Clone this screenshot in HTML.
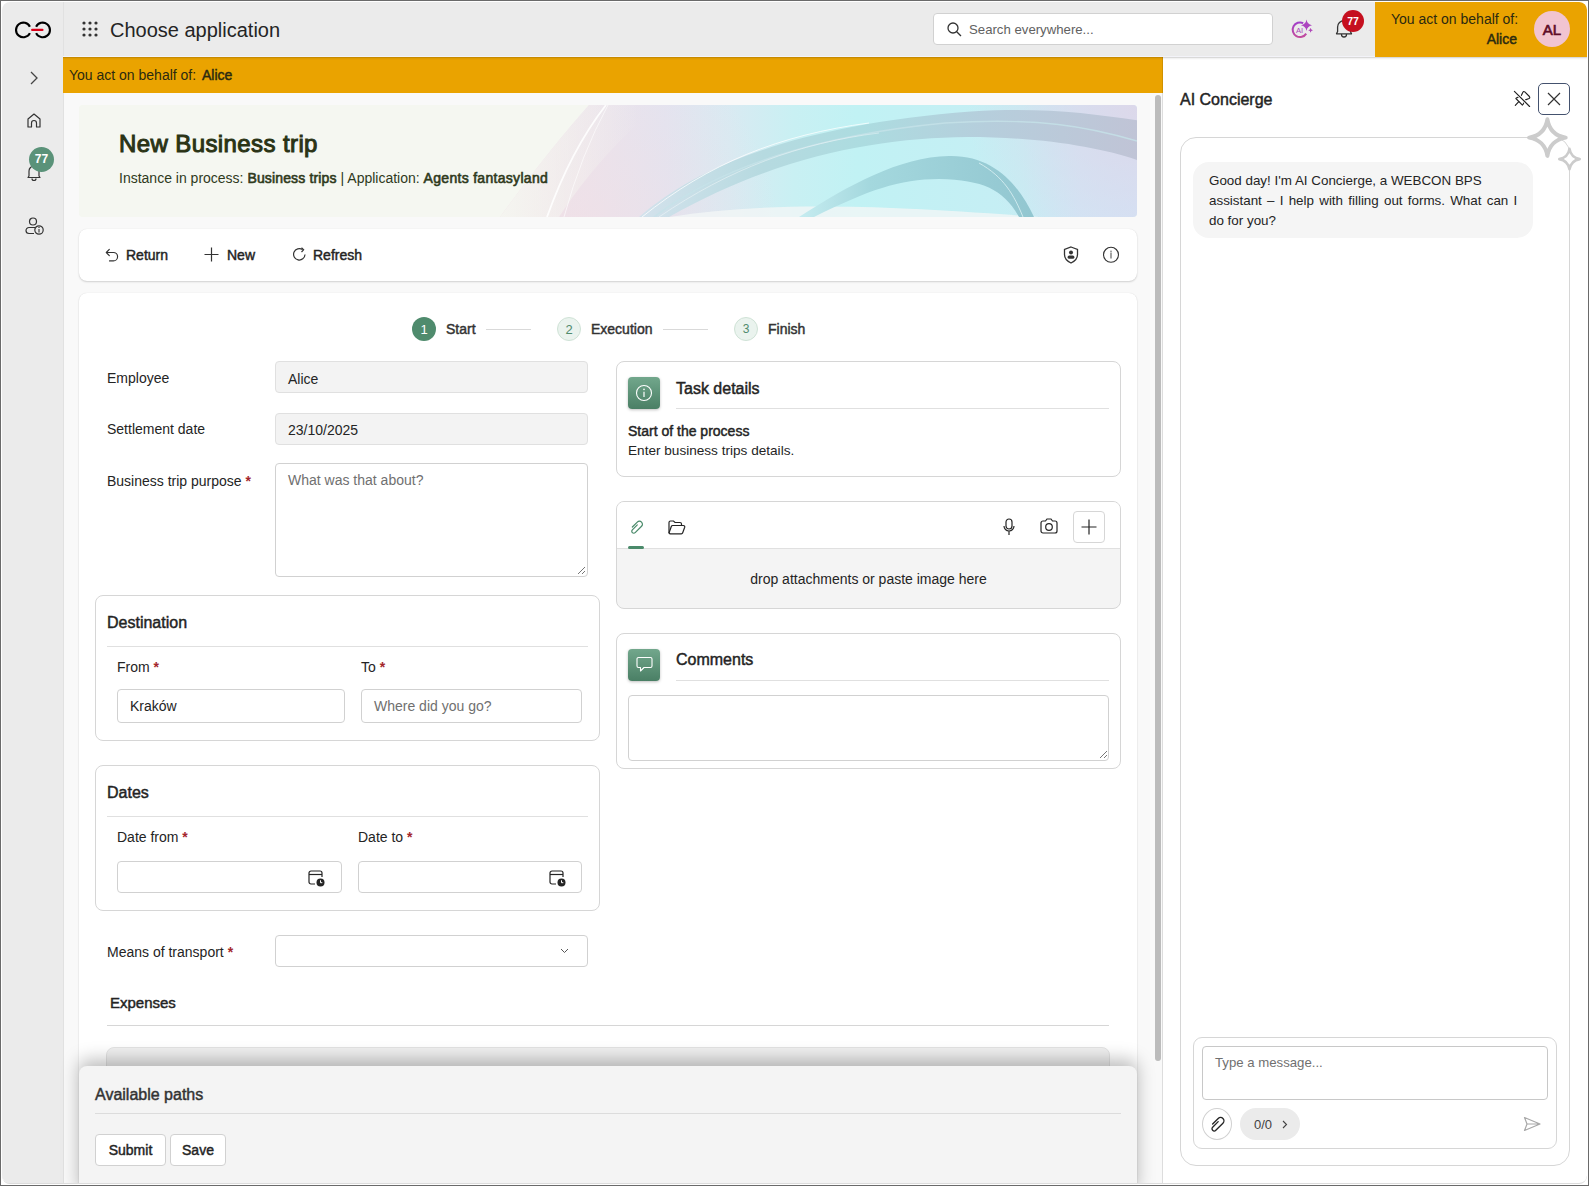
<!DOCTYPE html>
<html><head><meta charset="utf-8">
<style>
*{box-sizing:border-box;margin:0;padding:0}
html,body{width:1589px;height:1186px;overflow:hidden}
body{background:#fff;font-family:"Liberation Sans",sans-serif;color:#242424;position:relative}
.a{position:absolute}
.t{position:absolute;white-space:nowrap;line-height:1}
#frame{left:0;top:0;width:1589px;height:1186px;border:1px solid #6a6a6a;pointer-events:none;z-index:100}
#app{left:2px;top:2px;width:1585px;height:1182px;border-radius:8px;overflow:hidden;background:#ebebeb}
.req{color:#a4262c;font-weight:700}
svg{position:absolute;overflow:visible}
</style></head><body>
<div id="frame" class="a"></div>
<div class="a" style="left:2px;top:2px;width:1585px;height:1182px;border-bottom:1px solid #dcdcdc;border-radius:8px;z-index:99"></div>
<div id="app" class="a" style="height:1181px">
<div id="root" class="a" style="left:-2px;top:-2px;width:1589px;height:1186px">
  <!-- NAV -->
  <div class="a" style="left:63px;top:2px;width:1px;height:1182px;background:#e1e1e1"></div>
  <!-- logo -->
  <svg style="left:0;top:0" width="60" height="60" viewBox="0 0 60 60">
    <path d="M29.9 26.7 A7.3 7.3 0 1 0 29.9 33.1" fill="none" stroke="#000" stroke-width="2.1"/>
    <path d="M36.1 26.7 A7.3 7.3 0 1 1 36.1 33.1" fill="none" stroke="#000" stroke-width="2.1"/>
    <line x1="32.2" y1="29.9" x2="42.4" y2="29.9" stroke="#dc0019" stroke-width="2.3" stroke-linecap="round"/>
  </svg>
  <!-- chevron -->
  <svg style="left:30px;top:71px" width="8" height="14" viewBox="0 0 8 14"><path d="M1 1 L7 7 L1 13" fill="none" stroke="#444" stroke-width="1.3"/></svg>
  <!-- home -->
  <svg style="left:27px;top:113px" width="14" height="15" viewBox="0 0 14 15"><path d="M1 14 V6 L7 1 L13 6 V14 H9.5 V10 A2.5 2.5 0 0 0 4.5 10 V14 Z" fill="none" stroke="#333" stroke-width="1.2" stroke-linejoin="round"/></svg>
  <!-- bell -->
  <svg style="left:27px;top:164px" width="14" height="17" viewBox="0 0 14 17"><path d="M2 12 V7 A5 5 0 0 1 12 7 V12 L13 13.5 H1 Z M5 14.5 A2 2 0 0 0 9 14.5" fill="none" stroke="#333" stroke-width="1.2" stroke-linejoin="round"/></svg>
  <div class="a" style="left:29px;top:147px;width:25px;height:25px;border-radius:50%;background:#5a9279"></div>
  <div class="t" style="left:29px;top:153px;width:25px;text-align:center;font-size:12px;font-weight:700;color:#fff">77</div>
  <!-- user info -->
  <svg style="left:25px;top:217px" width="19" height="18" viewBox="0 0 19 18"><circle cx="8" cy="4.5" r="3.5" fill="none" stroke="#333" stroke-width="1.2"/><path d="M10 10.5 H4 A3 3 0 0 0 4 16.5 H9" fill="none" stroke="#333" stroke-width="1.2"/><circle cx="14" cy="13" r="4.2" fill="#ebebeb" stroke="#333" stroke-width="1.2"/><line x1="14" y1="12" x2="14" y2="15.5" stroke="#333" stroke-width="1.1"/><circle cx="14" cy="10.4" r="0.7" fill="#333"/></svg>

  <!-- TOPBAR -->
  <svg style="left:82px;top:21px" width="16" height="16" viewBox="0 0 16 16" fill="#333">
    <circle cx="2" cy="2" r="1.6"/><circle cx="8" cy="2" r="1.6"/><circle cx="14" cy="2" r="1.6"/>
    <circle cx="2" cy="8" r="1.6"/><circle cx="8" cy="8" r="1.6"/><circle cx="14" cy="8" r="1.6"/>
    <circle cx="2" cy="14" r="1.6"/><circle cx="8" cy="14" r="1.6"/><circle cx="14" cy="14" r="1.6"/>
  </svg>
  <div class="t" style="left:110px;top:20px;font-size:20px;color:#242424">Choose application</div>
  <div class="a" style="left:933px;top:13px;width:340px;height:32px;background:#fff;border:1px solid #d1d1d1;border-radius:4px"></div>
  <svg style="left:947px;top:22px" width="15" height="15" viewBox="0 0 15 15"><circle cx="6" cy="6" r="5" fill="none" stroke="#333" stroke-width="1.3"/><line x1="9.7" y1="9.7" x2="14" y2="14" stroke="#333" stroke-width="1.3"/></svg>
  <div class="t" style="left:969px;top:23px;font-size:13.2px;color:#616161">Search everywhere...</div>
  <!-- AI icon -->
  <svg style="left:1280px;top:10px" width="40" height="40" viewBox="1280 10 40 40">
    <defs><linearGradient id="aig" x1="0" y1="0" x2="0" y2="1"><stop offset="0" stop-color="#a23fc9"/><stop offset="1" stop-color="#c24c9e"/></linearGradient></defs>
    <path d="M1303.2 23.2 A7.3 7.3 0 1 0 1306.2 33.6" fill="none" stroke="url(#aig)" stroke-width="2"/>
    <text x="1296" y="32.8" font-family="Liberation Sans" font-size="7.6" fill="#a846b8">AI</text>
    <path d="M1306.5 19.5 Q1307.2 24.3 1312 25.2 Q1307.2 26.1 1306.5 31 Q1305.8 26.1 1301 25.2 Q1305.8 24.3 1306.5 19.5Z" fill="#ad45c0"/>
    <path d="M1310.6 27.8 Q1310.9 30 1313 30.3 Q1310.9 30.6 1310.6 32.8 Q1310.3 30.6 1308.2 30.3 Q1310.3 30 1310.6 27.8Z" fill="#b046b8"/>
  </svg>
  <!-- bell top -->
  <svg style="left:1335px;top:19px" width="18" height="19" viewBox="0 0 18 19"><path d="M2.6 12.5 V8 A6.4 6.4 0 0 1 15.4 8 V12.5 L16.5 14.8 H1.5 Z M6.5 15.5 A2.5 2.5 0 0 0 11.5 15.5" fill="none" stroke="#333" stroke-width="1.3" stroke-linejoin="round"/></svg>
  <div class="a" style="left:1342px;top:10px;width:22px;height:22px;border-radius:50%;background:#c50f1f"></div>
  <div class="t" style="left:1342px;top:15.5px;width:22px;text-align:center;font-size:10.5px;font-weight:700;color:#fff">77</div>
  <!-- orange user -->
  <div class="a" style="left:1375px;top:2px;width:1212px;height:55px;background:#eaa300;border-top-right-radius:7px;width:212px"></div>
  <div class="t" style="left:1391px;top:12px;width:126px;text-align:right;font-size:14px;color:#2b2a10">You act on behalf of:</div>
  <div class="t" style="left:1391px;top:32px;width:126px;text-align:right;font-size:14px;font-weight:400;-webkit-text-stroke:0.45px currentColor;color:#2b2a10">Alice</div>
  <div class="a" style="left:1534px;top:11px;width:36px;height:36px;border-radius:50%;background:#f1c4d0"></div>
  <div class="t" style="left:1534px;top:22px;width:36px;text-align:center;font-size:15px;font-weight:400;-webkit-text-stroke:0.65px currentColor;color:#5e0c28">AL</div>

  <!-- MAIN -->
  <div class="a" style="left:64px;top:57px;width:1099px;height:1127px;background:#f9f9f9"></div>
  <div class="a" style="left:63px;top:57px;width:1100px;height:36px;background:#eaa300"></div>
  <div class="t" style="left:69px;top:68px;font-size:14px;color:#2b2a10">You act on behalf of:</div>
  <div class="t" style="left:202px;top:68px;font-size:14px;font-weight:400;-webkit-text-stroke:0.45px currentColor;color:#2b2a10">Alice</div>
  <!-- scrollbar -->
  <div class="a" style="left:1155px;top:95px;width:6px;height:966px;border-radius:3px;background:#bcbcbc"></div>


  <!-- HEADER BANNER -->
  <div class="a" style="left:79px;top:105px;width:1058px;height:112px;border-radius:4px;overflow:hidden;background:#f5f7f1">
    <svg style="left:0;top:0" width="1058" height="112" viewBox="0 0 1058 112">
      <defs>
        <linearGradient id="bg2" x1="421" y1="0" x2="1058" y2="0" gradientUnits="userSpaceOnUse">
          <stop offset="0" stop-color="#f3e6e8"/>
          <stop offset="0.14" stop-color="#ece4ec"/>
          <stop offset="0.26" stop-color="#e3e4f0"/>
          <stop offset="0.36" stop-color="#d9eaf2"/>
          <stop offset="0.46" stop-color="#c9f0f3"/>
          <stop offset="0.56" stop-color="#c1f2f4"/>
          <stop offset="0.82" stop-color="#c6eef4"/>
          <stop offset="0.91" stop-color="#d0e6f6"/>
          <stop offset="1" stop-color="#d2e3f6"/>
        </linearGradient>
        <radialGradient id="pinkB" cx="500" cy="125" r="200" gradientUnits="userSpaceOnUse">
          <stop offset="0" stop-color="#f0dfe6" stop-opacity="0.9"/>
          <stop offset="1" stop-color="#eadfe8" stop-opacity="0"/>
        </radialGradient>
        <linearGradient id="fadeL" x1="421" y1="0" x2="560" y2="0" gradientUnits="userSpaceOnUse">
          <stop offset="0" stop-color="#f5f7f1" stop-opacity="0.9"/>
          <stop offset="1" stop-color="#f5f7f1" stop-opacity="0"/>
        </linearGradient>
        <linearGradient id="band" x1="560" y1="0" x2="1058" y2="0" gradientUnits="userSpaceOnUse">
          <stop offset="0" stop-color="#d4e2ec"/>
          <stop offset="0.25" stop-color="#b6dae0"/>
          <stop offset="0.45" stop-color="#acdce0"/>
          <stop offset="0.7" stop-color="#b6cedc"/>
          <stop offset="1" stop-color="#c0c4d6"/>
        </linearGradient>
        <linearGradient id="arc2" x1="720" y1="0" x2="955" y2="0" gradientUnits="userSpaceOnUse">
          <stop offset="0" stop-color="#c6ecf0"/>
          <stop offset="0.3" stop-color="#a4d8de"/>
          <stop offset="1" stop-color="#92c6d0"/>
        </linearGradient>
        <radialGradient id="tr" cx="1058" cy="0" r="170" gradientUnits="userSpaceOnUse">
          <stop offset="0" stop-color="#dcd8ea"/>
          <stop offset="1" stop-color="#dcd8ea" stop-opacity="0"/>
        </radialGradient>
      </defs>
      <rect width="1058" height="112" fill="#f5f7f1"/>
      <path d="M421 112 Q470 45 510 0 L1058 0 L1058 112 Z" fill="url(#bg2)"/>
      <path d="M421 112 Q470 45 510 0 L1058 0 L1058 112 Z" fill="url(#pinkB)" opacity="0.8"/>
      <path d="M421 112 Q470 45 510 0 L580 0 Q520 50 480 112 Z" fill="url(#fadeL)"/>
      <rect width="1058" height="112" fill="url(#tr)"/>
      <path d="M468 112 Q492 45 527 0" fill="none" stroke="#ffffff" stroke-width="1.8" opacity="0.85"/>
      <path d="M485 112 Q502 50 529 0" fill="none" stroke="#ffffff" stroke-width="1" opacity="0.6"/>
      <path d="M590 112 C680 98 780 98 960 112 Z" fill="#f2f6f6" opacity="0.8"/>
      <path d="M560 112 C620 60 720 20 892 6.5 C960 2 1010 8 1058 15.3 L1058 55 C1020 42 960 32 888 32 C800 33 700 50 590 112 Z" fill="url(#band)"/>
      <path d="M575 112 C640 62 740 30 866 18 C960 12 1010 22 1058 36" fill="none" stroke="#c6e2e8" stroke-width="1.4" opacity="0.8"/>
      <path d="M563 112 C630 58 700 30 790 18" fill="none" stroke="#ffffff" stroke-width="1" opacity="0.75"/>
      <path d="M580 112 C650 64 720 38 800 28" fill="none" stroke="#ffffff" stroke-width="0.8" opacity="0.5"/>
      <path d="M720 112 C770 80 820 52 870 51 C915 50 940 80 955 112 L940 112 C925 85 905 75 860 74 C820 74 790 85 735 112 Z" fill="url(#arc2)"/>
      <path d="M944 112 C935 90 925 72 900 58" fill="none" stroke="#e8f8fa" stroke-width="1" opacity="0.7"/>
    </svg>
    <div class="t" style="left:40px;top:26.5px;font-size:24px;letter-spacing:0.4px;font-weight:400;-webkit-text-stroke:1px currentColor;color:#2a3315">New Business trip</div>
    <div class="t" style="left:40px;top:66px;font-size:14px;color:#2f3a1c">Instance in process: <span style="font-weight:400;-webkit-text-stroke:0.6px currentColor;letter-spacing:0.15px">Business trips</span> | Application: <span style="font-weight:400;-webkit-text-stroke:0.6px currentColor;letter-spacing:0.3px">Agents fantasyland</span></div>
  </div>

  <!-- TOOLBAR -->
  <div class="a" style="left:79px;top:229px;width:1058px;height:52px;background:#fff;border-radius:8px;box-shadow:0 1px 2px rgba(0,0,0,0.16),0 0 1px rgba(0,0,0,0.1)"></div>
  <svg style="left:100px;top:244px" width="24" height="22" viewBox="100 244 24 22"><path d="M109.3 249.3 L106.3 252.5 L109.3 255.7 M106.6 252.5 H113.4 A4.2 4.2 0 0 1 113.4 260.9 H109.5" fill="none" stroke="#333" stroke-width="1.15" stroke-linejoin="round" stroke-linecap="round"/></svg>
  <div class="t" style="left:126px;top:248px;font-size:14px;font-weight:400;-webkit-text-stroke:0.45px currentColor;color:#242424">Return</div>
  <svg style="left:204px;top:247px" width="15" height="15" viewBox="0 0 15 15"><path d="M7.5 0.5 V14.5 M0.5 7.5 H14.5" fill="none" stroke="#333" stroke-width="1.2"/></svg>
  <div class="t" style="left:227px;top:248px;font-size:14px;font-weight:400;-webkit-text-stroke:0.45px currentColor;color:#242424">New</div>
  <svg style="left:292px;top:247px" width="15" height="15" viewBox="0 0 15 15"><path d="M13 7.5 A5.7 5.7 0 1 1 10.5 2.6" fill="none" stroke="#333" stroke-width="1.2"/><path d="M9.5 0.8 L11.6 2.8 L9.5 5" fill="none" stroke="#333" stroke-width="1.2"/></svg>
  <div class="t" style="left:313px;top:248px;font-size:14px;font-weight:400;-webkit-text-stroke:0.45px currentColor;color:#242424">Refresh</div>
  <!-- shield -->
  <svg style="left:1063px;top:246px" width="16" height="18" viewBox="0 0 16 18"><path d="M8 1 L14.5 3.5 V8.5 Q14.5 14 8 17 Q1.5 14 1.5 8.5 V3.5 Z" fill="none" stroke="#333" stroke-width="1.3"/><circle cx="8" cy="6.6" r="2" fill="#333"/><rect x="4.6" y="9.4" width="6.8" height="3.4" rx="1.6" fill="#333"/></svg>
  <svg style="left:1102px;top:246px" width="18" height="18" viewBox="0 0 18 18"><circle cx="9" cy="8.8" r="7.5" fill="none" stroke="#333" stroke-width="1.1"/><line x1="9" y1="6.6" x2="9" y2="12.6" stroke="#555" stroke-width="1.1"/><circle cx="9" cy="5.3" r="0.7" fill="#555"/></svg>

  <!-- FORM CARD -->
  <div class="a" style="left:79px;top:293px;width:1058px;height:900px;background:#fff;border-radius:8px;box-shadow:0 1px 2px rgba(0,0,0,0.14),0 0 1px rgba(0,0,0,0.12)"></div>


  <!-- STEPS -->
  <div class="a" style="left:412px;top:317px;width:24px;height:24px;border-radius:50%;background:#4f8b6d"></div>
  <div class="t" style="left:412px;top:323px;width:24px;text-align:center;font-size:13px;color:#fff">1</div>
  <div class="t" style="left:446px;top:322px;font-size:14px;font-weight:400;-webkit-text-stroke:0.45px currentColor;color:#333">Start</div>
  <div class="a" style="left:486px;top:329px;width:45px;height:1px;background:#d9d9d9"></div>
  <div class="a" style="left:557px;top:317px;width:24px;height:24px;border-radius:50%;background:#eaf3ee;border:1px solid #cfe2d6"></div>
  <div class="t" style="left:557px;top:323px;width:24px;text-align:center;font-size:13px;color:#4f8b6d">2</div>
  <div class="t" style="left:591px;top:322px;font-size:14px;font-weight:400;-webkit-text-stroke:0.45px currentColor;color:#333">Execution</div>
  <div class="a" style="left:663px;top:329px;width:45px;height:1px;background:#d9d9d9"></div>
  <div class="a" style="left:734px;top:317px;width:24px;height:24px;border-radius:50%;background:#eaf3ee;border:1px solid #cfe2d6"></div>
  <div class="t" style="left:734px;top:323px;width:24px;text-align:center;font-size:12px;color:#4f8b6d">3</div>
  <div class="t" style="left:768px;top:322px;font-size:14px;font-weight:400;-webkit-text-stroke:0.45px currentColor;color:#333">Finish</div>

  <!-- LEFT FIELDS -->
  <div class="t" style="left:107px;top:371px;font-size:14px">Employee</div>
  <div class="a" style="left:275px;top:361px;width:313px;height:32px;background:#f3f3f3;border:1px solid #e0e0e0;border-radius:4px"></div>
  <div class="t" style="left:288px;top:372px;font-size:14px">Alice</div>
  <div class="t" style="left:107px;top:422px;font-size:14px">Settlement date</div>
  <div class="a" style="left:275px;top:413px;width:313px;height:32px;background:#f3f3f3;border:1px solid #e0e0e0;border-radius:4px"></div>
  <div class="t" style="left:288px;top:423px;font-size:14px">23/10/2025</div>
  <div class="t" style="left:107px;top:474px;font-size:14px">Business trip purpose <span class="req">*</span></div>
  <div class="a" style="left:275px;top:463px;width:313px;height:114px;background:#fff;border:1px solid #d1d1d1;border-radius:4px"></div>
  <div class="t" style="left:288px;top:473px;font-size:14px;color:#707070">What was that about?</div>
  <svg style="left:577px;top:566px" width="9" height="9" viewBox="0 0 9 9"><path d="M8 1 L1 8 M8 5 L5 8" stroke="#777" stroke-width="1"/></svg>

  <!-- DESTINATION -->
  <div class="a" style="left:95px;top:595px;width:505px;height:146px;border:1px solid #d6d6d6;border-radius:8px"></div>
  <div class="t" style="left:107px;top:615px;font-size:16px;font-weight:400;-webkit-text-stroke:0.45px currentColor;color:#242424">Destination</div>
  <div class="a" style="left:107px;top:646px;width:481px;height:1px;background:#e0e0e0"></div>
  <div class="t" style="left:117px;top:660px;font-size:14px">From <span class="req">*</span></div>
  <div class="a" style="left:117px;top:689px;width:228px;height:34px;border:1px solid #d1d1d1;border-radius:4px;background:#fff"></div>
  <div class="t" style="left:130px;top:699px;font-size:14px">Kraków</div>
  <div class="t" style="left:361px;top:660px;font-size:14px">To <span class="req">*</span></div>
  <div class="a" style="left:361px;top:689px;width:221px;height:34px;border:1px solid #d1d1d1;border-radius:4px;background:#fff"></div>
  <div class="t" style="left:374px;top:699px;font-size:14px;color:#707070">Where did you go?</div>

  <!-- DATES -->
  <div class="a" style="left:95px;top:765px;width:505px;height:146px;border:1px solid #d6d6d6;border-radius:8px"></div>
  <div class="t" style="left:107px;top:785px;font-size:16px;font-weight:400;-webkit-text-stroke:0.45px currentColor;color:#242424">Dates</div>
  <div class="a" style="left:107px;top:816px;width:481px;height:1px;background:#e0e0e0"></div>
  <div class="t" style="left:117px;top:830px;font-size:14px">Date from <span class="req">*</span></div>
  <div class="a" style="left:117px;top:861px;width:225px;height:32px;border:1px solid #d1d1d1;border-radius:4px;background:#fff"></div>
  <div class="t" style="left:358px;top:830px;font-size:14px">Date to <span class="req">*</span></div>
  <div class="a" style="left:358px;top:861px;width:224px;height:32px;border:1px solid #d1d1d1;border-radius:4px;background:#fff"></div>
  <svg style="left:308px;top:869.5px" width="18" height="17" viewBox="0 0 18 17"><path d="M7 14 H3 A2 2 0 0 1 1 12 V3 A2 2 0 0 1 3 1 H12 A2 2 0 0 1 14 3 V7" fill="none" stroke="#242424" stroke-width="1.2"/><line x1="1" y1="4.5" x2="14" y2="4.5" stroke="#242424" stroke-width="1.2"/><circle cx="12.5" cy="12.5" r="4" fill="#242424"/><path d="M12.5 10.3 V12.7 H14.3" fill="none" stroke="#fff" stroke-width="1"/></svg>
  <svg style="left:549px;top:869.5px" width="18" height="17" viewBox="0 0 18 17"><path d="M7 14 H3 A2 2 0 0 1 1 12 V3 A2 2 0 0 1 3 1 H12 A2 2 0 0 1 14 3 V7" fill="none" stroke="#242424" stroke-width="1.2"/><line x1="1" y1="4.5" x2="14" y2="4.5" stroke="#242424" stroke-width="1.2"/><circle cx="12.5" cy="12.5" r="4" fill="#242424"/><path d="M12.5 10.3 V12.7 H14.3" fill="none" stroke="#fff" stroke-width="1"/></svg>

  <!-- MEANS OF TRANSPORT -->
  <div class="t" style="left:107px;top:945px;font-size:14px">Means of transport <span class="req">*</span></div>
  <div class="a" style="left:275px;top:935px;width:313px;height:32px;border:1px solid #d1d1d1;border-radius:4px;background:#fff"></div>
  <svg style="left:560px;top:948px" width="9" height="6" viewBox="0 0 9 6"><path d="M1 1 L4.5 4.5 L8 1" fill="none" stroke="#555" stroke-width="1"/></svg>

  <!-- EXPENSES -->
  <div class="t" style="left:110px;top:995px;font-size:15px;font-weight:400;-webkit-text-stroke:0.45px currentColor;color:#242424">Expenses</div>
  <div class="a" style="left:107px;top:1025px;width:1002px;height:1px;background:#d6d6d6"></div>
  <div class="a" style="left:106px;top:1047px;width:1004px;height:40px;background:#f0f0f0;border:1px solid #e3e3e3;border-radius:8px 8px 0 0"></div>

  <!-- TASK DETAILS -->
  <div class="a" style="left:616px;top:361px;width:505px;height:116px;border:1px solid #d6d6d6;border-radius:8px;background:#fff"></div>
  <div class="a" style="left:628px;top:377px;width:32px;height:32px;border-radius:4px;background:linear-gradient(#72a78c,#4a7f65);box-shadow:0 1px 3px rgba(0,0,0,0.25)"></div>
  <svg style="left:635px;top:384px" width="18" height="18" viewBox="0 0 18 18"><circle cx="9" cy="9" r="7.5" fill="none" stroke="#fff" stroke-width="1.1"/><line x1="9" y1="7.8" x2="9" y2="13" stroke="#fff" stroke-width="1.2"/><circle cx="9" cy="5.4" r="0.8" fill="#fff"/></svg>
  <div class="t" style="left:676px;top:381px;font-size:16px;font-weight:400;-webkit-text-stroke:0.45px currentColor;color:#242424">Task details</div>
  <div class="a" style="left:676px;top:408px;width:433px;height:1px;background:#e0e0e0"></div>
  <div class="t" style="left:628px;top:424px;font-size:14px;font-weight:400;-webkit-text-stroke:0.45px currentColor;color:#242424">Start of the process</div>
  <div class="t" style="left:628px;top:444px;font-size:13.6px;color:#242424">Enter business trips details.</div>

  <!-- ATTACHMENTS -->
  <div class="a" style="left:616px;top:501px;width:505px;height:108px;border:1px solid #d6d6d6;border-radius:8px;background:#f4f4f4;overflow:hidden">
    <div class="a" style="left:0;top:0;width:503px;height:47px;background:#fff;border-bottom:1px solid #e0e0e0"></div>
  </div>
  <svg style="left:0;top:0" width="1589" height="1186" viewBox="0 0 1589 1186"><path transform="translate(636.6 527) rotate(45)" d="M -3 3 V -4 A 3 3 0 0 1 3 -4 V 5 A 2 2 0 0 1 -1 5 V -2" fill="none" stroke="#4a8a6a" stroke-width="1.2" stroke-linecap="round"/></svg>
  <div class="a" style="left:628px;top:546px;width:16px;height:3px;border-radius:2px;background:#4a8a6a"></div>
  <svg style="left:668px;top:520px" width="18" height="15" viewBox="0 0 18 15"><path d="M1 13 V2.5 A1.5 1.5 0 0 1 2.5 1 H5.5 L7 2.5 H12 A1.5 1.5 0 0 1 13.5 4 V5.5" fill="none" stroke="#242424" stroke-width="1.2"/><path d="M1 13 L3.3 6.5 A1.5 1.5 0 0 1 4.7 5.5 H15.5 A1.3 1.3 0 0 1 16.7 7.2 L14.7 12.8 A1.5 1.5 0 0 1 13.3 13.8 H2 Z" fill="none" stroke="#242424" stroke-width="1.2"/></svg>
  <svg style="left:1003px;top:518px" width="12" height="18" viewBox="0 0 12 18"><rect x="3" y="1" width="6" height="10" rx="3" fill="none" stroke="#242424" stroke-width="1.2"/><path d="M1 8 A5 5 0 0 0 11 8 M6 13 V17" fill="none" stroke="#242424" stroke-width="1.2"/></svg>
  <svg style="left:1040px;top:518px" width="18" height="17" viewBox="0 0 18 17"><path d="M1 5 A2 2 0 0 1 3 3 H5.5 L7 1 H11 L12.5 3 H15 A2 2 0 0 1 17 5 V13 A2 2 0 0 1 15 15 H3 A2 2 0 0 1 1 13 Z" fill="none" stroke="#242424" stroke-width="1.2"/><circle cx="9" cy="9" r="3.3" fill="none" stroke="#242424" stroke-width="1.2"/></svg>
  <div class="a" style="left:1073px;top:511px;width:32px;height:32px;border:1px solid #d6d6d6;border-radius:4px;background:#fff"></div>
  <svg style="left:1081px;top:519px" width="16" height="16" viewBox="0 0 16 16"><path d="M8 0.5 V15.5 M0.5 8 H15.5" stroke="#242424" stroke-width="1.2"/></svg>
  <div class="t" style="left:616px;top:572px;width:505px;text-align:center;font-size:14px;color:#242424">drop attachments or paste image here</div>

  <!-- COMMENTS -->
  <div class="a" style="left:616px;top:633px;width:505px;height:136px;border:1px solid #d6d6d6;border-radius:8px;background:#fff"></div>
  <div class="a" style="left:628px;top:649px;width:32px;height:32px;border-radius:4px;background:linear-gradient(#72a78c,#4a7f65);box-shadow:0 1px 3px rgba(0,0,0,0.25)"></div>
  <svg style="left:636px;top:656px" width="17" height="17" viewBox="0 0 17 17"><path d="M2.5 1.5 H14.5 A1.5 1.5 0 0 1 16 3 V10 A1.5 1.5 0 0 1 14.5 11.5 H8 L4.5 15 V11.5 H2.5 A1.5 1.5 0 0 1 1 10 V3 A1.5 1.5 0 0 1 2.5 1.5 Z" fill="none" stroke="#fff" stroke-width="1.1" stroke-linejoin="round"/></svg>
  <div class="t" style="left:676px;top:652px;font-size:16px;font-weight:400;-webkit-text-stroke:0.45px currentColor;color:#242424">Comments</div>
  <div class="a" style="left:676px;top:680px;width:433px;height:1px;background:#e0e0e0"></div>
  <div class="a" style="left:628px;top:695px;width:481px;height:66px;border:1px solid #d1d1d1;border-radius:4px;background:#fff"></div>
  <svg style="left:1099px;top:750px" width="9" height="9" viewBox="0 0 9 9"><path d="M8 1 L1 8 M8 5 L5 8" stroke="#777" stroke-width="1"/></svg>

  <!-- AVAILABLE PATHS -->
  <div class="a" style="left:79px;top:1066px;width:1058px;height:130px;background:#f4f4f4;border-radius:8px 8px 0 0;box-shadow:0 -6px 18px rgba(0,0,0,0.27)"></div>
  <div class="t" style="left:95px;top:1087px;font-size:16px;font-weight:400;-webkit-text-stroke:0.45px currentColor;color:#333">Available paths</div>
  <div class="a" style="left:95px;top:1113px;width:1026px;height:1px;background:#dcdcdc"></div>
  <div class="a" style="left:95px;top:1134px;width:71px;height:32px;background:#fff;border:1px solid #d1d1d1;border-radius:4px"></div>
  <div class="t" style="left:95px;top:1143px;width:71px;text-align:center;font-size:14px;font-weight:400;-webkit-text-stroke:0.45px currentColor;color:#242424">Submit</div>
  <div class="a" style="left:170px;top:1134px;width:56px;height:32px;background:#fff;border:1px solid #d1d1d1;border-radius:4px"></div>
  <div class="t" style="left:170px;top:1143px;width:56px;text-align:center;font-size:14px;font-weight:400;-webkit-text-stroke:0.45px currentColor;color:#242424">Save</div>

  <!-- RIGHT PANEL -->
  
  <div class="a" style="left:1163px;top:57px;width:424px;height:1127px;background:#fff;border-bottom-right-radius:8px"></div>
  <div class="a" style="left:1162px;top:57px;width:1px;height:1127px;background:rgba(0,0,0,0.11)"></div>

  <div class="a" style="left:63px;top:57px;width:1524px;height:3px;background:linear-gradient(rgba(0,0,0,0.2),rgba(0,0,0,0.05) 50%,rgba(0,0,0,0))"></div>
  <div class="a" style="left:63px;top:56px;width:1312px;height:1px;background:#f3f3f8"></div>
  <div class="t" style="left:1180px;top:92.3px;font-size:16px;font-weight:400;-webkit-text-stroke:0.45px currentColor;color:#242424">AI Concierge</div>
  <svg style="left:1500px;top:80px" width="40" height="35" viewBox="1500 80 40 35">
    <path d="M1521.3 95.6 L1522.9 92.2 Q1523.7 90.9 1524.8 91.9 L1529.4 96.5 Q1530.3 97.7 1529 98.5 L1525.5 99.9" fill="none" stroke="#242424" stroke-width="1.15" stroke-linejoin="round" stroke-linecap="round"/>
    <path d="M1519.6 96.9 Q1517.2 97 1515.9 98.5 L1522.4 105.1 Q1523.3 104.4 1523.6 103.4 L1524.6 100.8" fill="none" stroke="#242424" stroke-width="1.15" stroke-linejoin="round" stroke-linecap="round"/>
    <path d="M1518.8 101.7 L1515.3 105.4" fill="none" stroke="#242424" stroke-width="1.15" stroke-linecap="round"/>
    <path d="M1514.4 91.3 L1529.6 106.5" fill="none" stroke="#fff" stroke-width="3"/>
    <path d="M1514.4 91.3 L1529.6 106.5" fill="none" stroke="#242424" stroke-width="1.15" stroke-linecap="round"/>
  </svg>
  <div class="a" style="left:1538px;top:83px;width:32px;height:32px;border:1.5px solid #44526e;border-radius:5px"></div>
  <svg style="left:1547px;top:92px" width="14" height="14" viewBox="0 0 14 14"><path d="M1 1 L13 13 M13 1 L1 13" stroke="#333" stroke-width="1.2"/></svg>
  <!-- chat outer -->
  <div class="a" style="left:1180px;top:137px;width:390px;height:1029px;border:1px solid #d6d6d6;border-radius:16px;background:#fff"></div>
  <!-- sparkles -->
  <svg style="left:1500px;top:100px" width="89" height="90" viewBox="1500 100 89 90">
    <path d="M1547.4 119.3 Q1550.0 135.0 1565.7 137.6 Q1550.0 140.2 1547.4 155.9 Q1544.8000000000002 140.2 1529.1000000000001 137.6 Q1544.8000000000002 135.0 1547.4 119.3 Z" fill="#fff" stroke="#cccccc" stroke-width="4" stroke-linejoin="round"/>
    <path d="M1569.5 148.9 Q1571.0 157.6 1579.7 159.1 Q1571.0 160.6 1569.5 169.29999999999998 Q1568.0 160.6 1559.3 159.1 Q1568.0 157.6 1569.5 148.9 Z" fill="#fff" stroke="#cccccc" stroke-width="2.6" stroke-linejoin="round"/>
  </svg>
  <div class="a" style="left:1193px;top:162px;width:340px;height:76px;background:#f5f5f5;border-radius:16px"></div>
  <div class="a" style="left:1209px;top:171px;width:320px;font-size:13.4px;line-height:20px;color:#242424">Good day! I'm AI Concierge, a WEBCON BPS<br><span style="word-spacing:1.5px">assistant – I help with filling out forms. What can I</span><br>do for you?</div>
  <!-- input -->
  <div class="a" style="left:1193px;top:1037px;width:364px;height:112px;border:1px solid #d6d6d6;border-radius:9px;background:#fff"></div>
  <div class="a" style="left:1202px;top:1046px;width:346px;height:54px;border:1px solid #c8c8c8;border-radius:4px;background:#fff"></div>
  <div class="t" style="left:1215px;top:1056px;font-size:13.2px;color:#707070">Type a message...</div>
  <div class="a" style="left:1202px;top:1108px;width:30px;height:32px;border:1px solid #d1d1d1;border-radius:50%;background:#fff"></div>
  <svg style="left:0;top:0" width="1589" height="1186" viewBox="0 0 1589 1186"><path transform="translate(1217.4 1124) rotate(45) scale(1.12)" d="M -3 3 V -4 A 3 3 0 0 1 3 -4 V 5 A 2 2 0 0 1 -1 5 V -2" fill="none" stroke="#242424" stroke-width="1.2" stroke-linecap="round"/></svg>
  <div class="a" style="left:1240px;top:1108px;width:60px;height:32px;border-radius:16px;background:#ebebeb"></div>
  <div class="t" style="left:1254px;top:1118px;font-size:13px;color:#424242">0/0</div>
  <svg style="left:1282px;top:1120px" width="6" height="9" viewBox="0 0 6 9"><path d="M1 1 L4.5 4.5 L1 8" fill="none" stroke="#424242" stroke-width="1.1"/></svg>
  <svg style="left:1523px;top:1116px" width="18" height="16" viewBox="0 0 18 16"><path d="M1.5 1.5 L17 8 L1.5 14.5 L4 8 Z M4 8 H17" fill="none" stroke="#a8a8a8" stroke-width="1.2" stroke-linejoin="round"/></svg>
</div>
</div>
</body></html>
